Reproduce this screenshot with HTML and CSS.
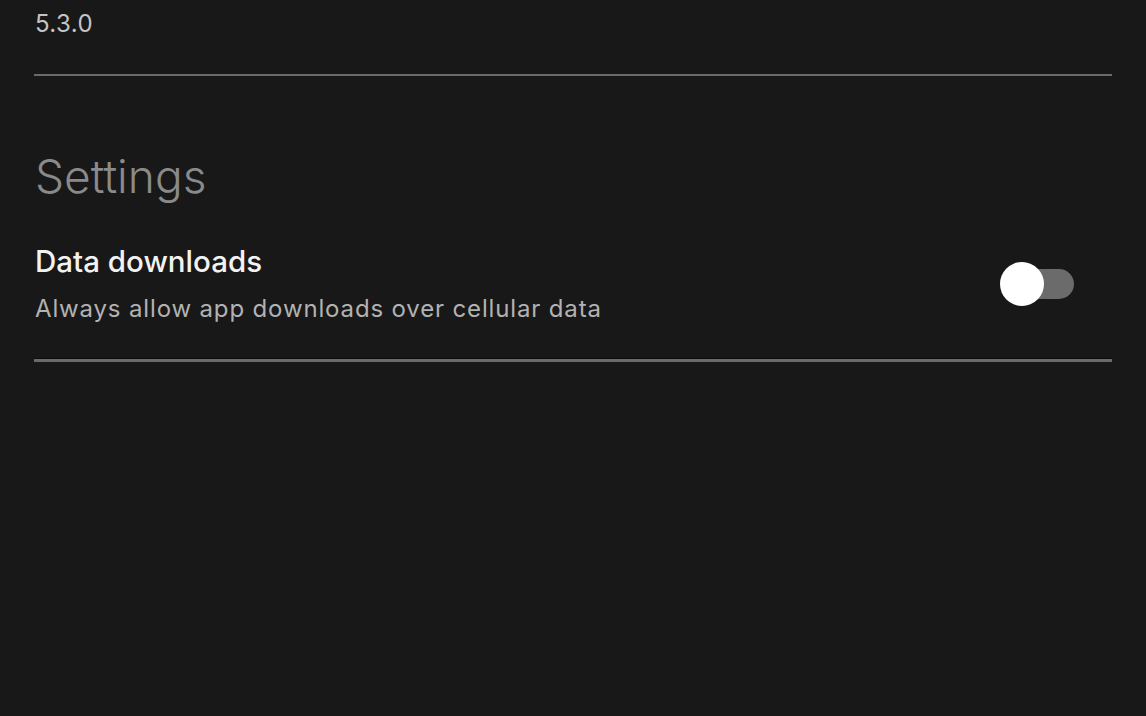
FILE: index.html
```html
<!DOCTYPE html>
<html>
<head>
<meta charset="utf-8">
<link rel="stylesheet" href="styles.css">
</head>
<body>
<div class="page">
  <div class="version">5.3.0</div>
  <div class="divider first"></div>
  <h2 class="section-title">Settings</h2>
  <div class="setting-row">
    <div class="setting-text">
      <div class="setting-title">Data downloads</div>
      <div class="setting-desc">Always allow app downloads over cellular data</div>
    </div>
    <div class="toggle"><div class="toggle-track"></div><div class="toggle-knob"></div></div>
  </div>
  <div class="divider last"></div>
</div>
</body>
</html>
```

FILE: styles.css
```css
html, body {
  margin: 0;
  padding: 0;
  background: #181818;
  height: 100%;
  overflow: hidden;
}
body {
  font-family: Inter, "Noto Sans", sans-serif;
  color: #fff;
}
.page {
  padding: 8px 34px 0 34px;
}
.version {
  font-size: 24px;
  line-height: 32px;
  color: #c4c4c4;
  padding-left: 1px;
  letter-spacing: 0.4px;
}
.divider {
  height: 2px;
  background: #6a6a6a;
}
.divider.first {
  margin-top: 34px;
}
.divider.last {
  height: 3px;
  border-top: 1px solid #0e0e0e;
}
.section-title {
  margin: 72px 0 0 1px;
  font-size: 46px;
  line-height: 56px;
  font-weight: 300;
  color: #8a8a8a;
}
.setting-row {
  display: flex;
  align-items: center;
  justify-content: space-between;
  margin-top: 40px;
  padding-bottom: 35px;
}
.setting-text {
  padding-left: 1px;
}
.setting-title {
  font-size: 29.5px;
  line-height: 34px;
  font-weight: 500;
  color: #f2f2f2;
}
.setting-desc {
  margin-top: 17px;
  font-size: 24px;
  line-height: 28px;
  letter-spacing: 0.85px;
  color: #b2b2b2;
}
.toggle {
  position: relative;
  width: 74px;
  height: 46px;
  margin-right: 38px;
}
.toggle-track {
  position: absolute;
  left: 19px;
  top: 8px;
  width: 55px;
  height: 30px;
  border-radius: 15px;
  background: #6b6b6b;
}
.toggle-knob {
  position: absolute;
  left: 0;
  top: 1px;
  width: 44px;
  height: 44px;
  border-radius: 50%;
  background: #fff;
}
```
